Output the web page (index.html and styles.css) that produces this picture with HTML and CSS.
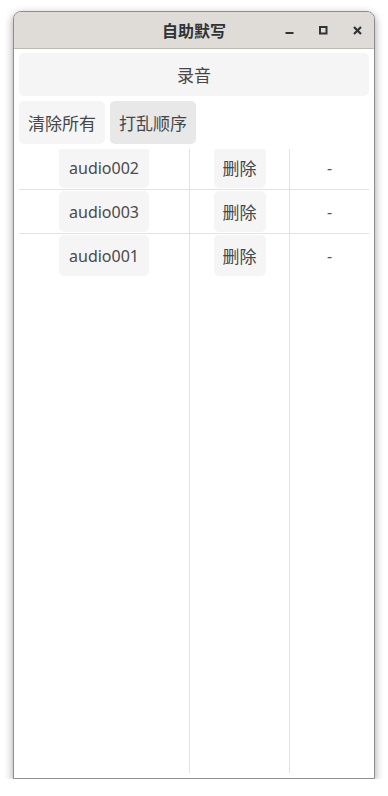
FILE: index.html
```html
<!DOCTYPE html>
<html lang="zh">
<head>
<meta charset="utf-8">
<title>自助默写</title>
<link rel="stylesheet" href="styles.css">
</head>
<body>
<div class="window">
  <header class="titlebar">
    <span class="spacer"></span>
    <span class="title">自助默写</span>
    <div class="controls">
      <span class="ctl"><svg width="9" height="9" viewBox="0 0 9 9"><rect x="0.5" y="6" width="8" height="2" fill="#2e3436"/></svg></span>
      <span class="ctl"><svg width="9" height="9" viewBox="0 0 9 9"><rect x="1" y="1" width="6.5" height="6.5" fill="none" stroke="#2e3436" stroke-width="2"/></svg></span>
      <span class="ctl"><svg width="9" height="9" viewBox="0 0 9 9"><path d="M1 1 L8 8 M8 1 L1 8" stroke="#2e3436" stroke-width="2.2" fill="none"/></svg></span>
    </div>
  </header>
  <main class="content">
    <button class="btn wide">录音</button>
    <div class="toolbar">
      <button class="btn">清除所有</button>
      <button class="btn hover">打乱顺序</button>
    </div>
    <div class="table-wrap">
      <div class="table">
        <div class="cell c1"><button class="btn latin">audio002</button></div>
        <div class="cell c2"><button class="btn">删除</button></div>
        <div class="cell c3"><span class="dash">-</span></div>

        <div class="cell c1 sep"><button class="btn latin">audio003</button></div>
        <div class="cell c2 sep"><button class="btn">删除</button></div>
        <div class="cell c3 sep"><span class="dash">-</span></div>

        <div class="cell c1 sep"><button class="btn latin">audio001</button></div>
        <div class="cell c2 sep"><button class="btn">删除</button></div>
        <div class="cell c3 sep"><span class="dash">-</span></div>

        <div class="cell c1 fill"></div>
        <div class="cell c2 fill"></div>
        <div class="cell c3 fill"></div>
      </div>
    </div>
  </main>
</div>
</body>
</html>
```

FILE: styles.css
```css
html, body {
  margin: 0;
  background: #ffffff;
}

body {
  font-family: "Noto Sans CJK SC", "Noto Sans", sans-serif;
  font-size: 17px;
}

.window {
  box-sizing: border-box;
  width: 362px;
  height: 768px;
  margin: 11px 0 0 13px;
  border: 1px solid #8e8e8e;
  border-radius: 8px 8px 0 0;
  background: #ffffff;
  box-shadow: 0 3px 9px rgba(0, 0, 0, 0.38);
  display: flex;
  flex-direction: column;
  overflow: hidden;
}

.titlebar {
  flex: 0 0 auto;
  height: 36px;
  background: #dfdbd7;
  border-bottom: 1px solid #bfb9b3;
  border-radius: 7px 7px 0 0;
  display: grid;
  grid-template-columns: 1fr auto 1fr;
  align-items: center;
}

.title {
  font-size: 16px;
  font-weight: 700;
  color: #2e3436;
  line-height: 1;
}

.controls {
  justify-self: end;
  display: flex;
  height: 36px;
}

.ctl {
  width: 34px;
  height: 36px;
  display: flex;
  align-items: center;
  justify-content: center;
  padding-top: 1px;
  box-sizing: border-box;
}

.ctl svg {
  display: block;
}

.content {
  flex: 1 1 auto;
  min-height: 0;
  padding: 4px 5px 5px;
  display: flex;
  flex-direction: column;
}

.btn {
  font-family: inherit;
  font-size: 17px;
  color: #474747;
  background: #f5f5f5;
  border: none;
  border-radius: 5px;
  padding: 0 9px;
  height: 43px;
  line-height: 1;
  margin: 0;
}

.btn.latin {
  font-family: "Noto Sans", sans-serif;
  font-size: 16px;
  padding: 0 10px;
  color: #4a4a4a;
}

.btn.hover {
  background: #e8e8e8;
}

.btn.wide {
  width: 100%;
  flex: 0 0 auto;
}

.toolbar {
  flex: 0 0 auto;
  display: flex;
  gap: 5px;
  margin-top: 5px;
}

.table-wrap {
  flex: 1 1 auto;
  min-height: 0;
  margin-top: 5px;
  overflow: hidden;
}

.table {
  margin-top: -3px;
  height: calc(100% + 3px);
  display: grid;
  grid-template-columns: 171px 100px 1fr;
  grid-template-rows: 43px 44px 44px 1fr;
}

.cell {
  display: flex;
  align-items: center;
  justify-content: center;
  box-sizing: border-box;
}

.cell .btn {
  height: 41px;
}

.c1, .c2 {
  border-right: 1px solid #e2e2e2;
}

.sep {
  border-top: 1px solid #e2e2e2;
}

.dash {
  color: #555555;
  font-family: "Noto Sans", sans-serif;
  font-size: 16px;
}
```
